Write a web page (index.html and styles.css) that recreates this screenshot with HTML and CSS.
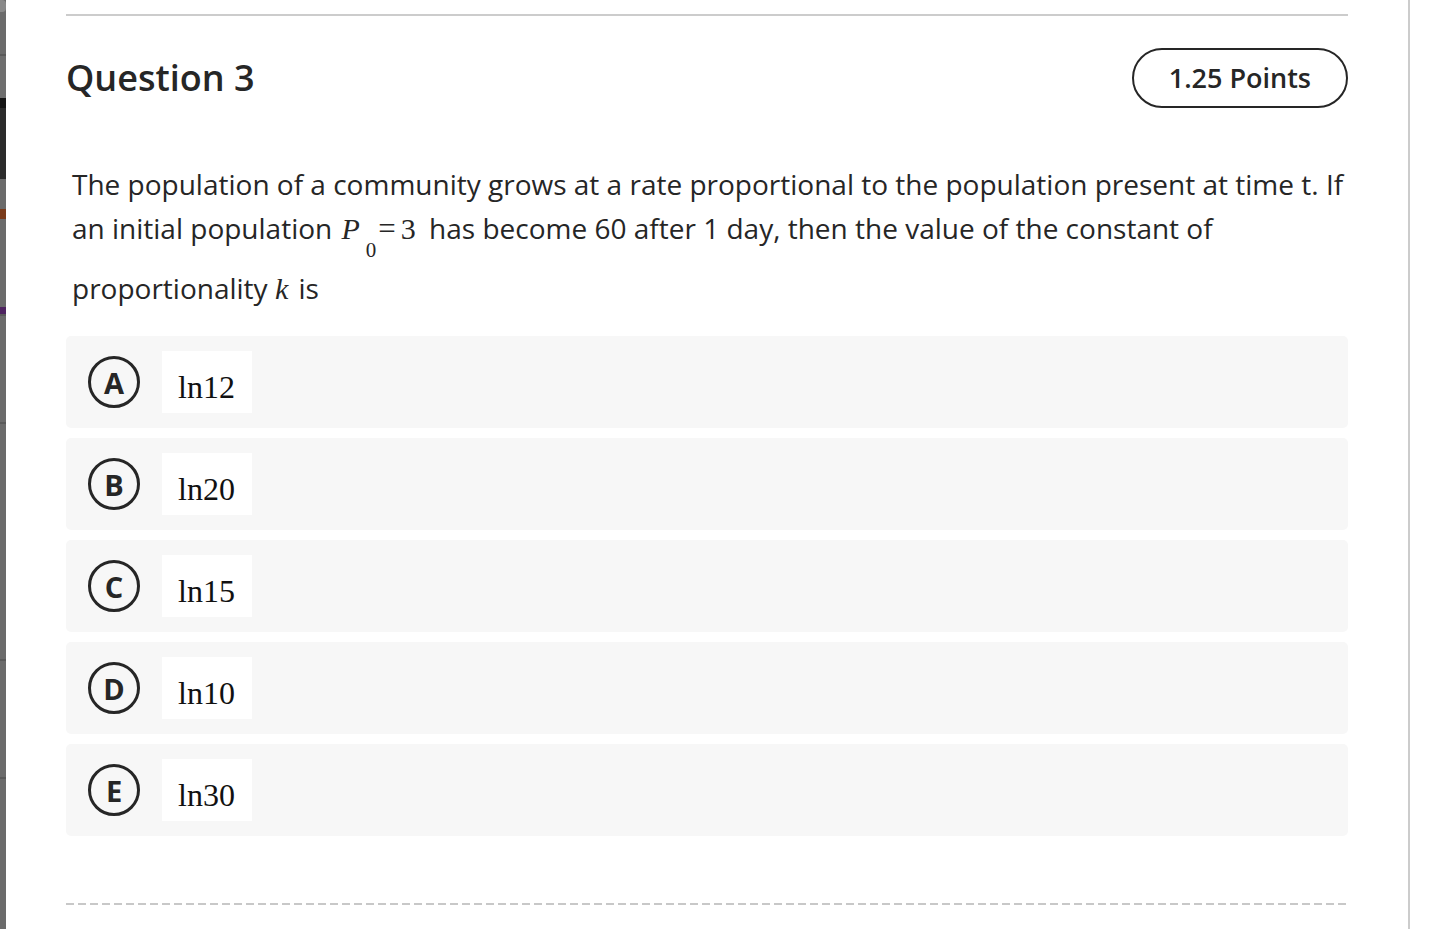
FILE: index.html
```html
<!DOCTYPE html>
<html lang="en">
<head>
<meta charset="utf-8">
<title>Question 3</title>
<link rel="stylesheet" href="styles.css">
</head>
<body>
<div class="page">
  <div class="strip">
    <div class="seg seg-cap"></div>
    <div class="seg seg-g1"></div>
    <div class="seg seg-line"></div>
    <div class="seg seg-g2"></div>
    <div class="seg seg-black"></div>
    <div class="seg seg-dark"></div>
    <div class="seg seg-g3"></div>
    <div class="seg seg-orange"></div>
    <div class="seg seg-g4"></div>
    <div class="seg seg-purple"></div>
    <div class="seg seg-line"></div>
    <div class="seg seg-g5"></div>
    <div class="seg seg-line"></div>
    <div class="seg seg-g6"></div>
    <div class="seg seg-line"></div>
    <div class="seg seg-g7"></div>
    <div class="seg seg-line"></div>
    <div class="seg seg-rest"></div>
  </div>
  <main class="main">
    <div class="top-rule"></div>
    <header class="q-header">
      <h2 class="q-title">Question 3</h2>
      <div class="points">1.25 Points</div>
    </header>
    <p class="q-text">The population of a community grows at a rate proportional to the population present at time t. If an initial population <span class="math"><i class="mi">P</i><span class="msub">0</span><span class="mo">=</span><span class="mn">3</span></span> has become 60 after 1 day, then the value of the constant of proportionality <i class="mi mk">k</i> is</p>
    <div class="options">
      <div class="option"><span class="letter">A</span><span class="answer">ln12</span></div>
      <div class="option"><span class="letter">B</span><span class="answer">ln20</span></div>
      <div class="option"><span class="letter">C</span><span class="answer">ln15</span></div>
      <div class="option"><span class="letter">D</span><span class="answer">ln10</span></div>
      <div class="option"><span class="letter">E</span><span class="answer">ln30</span></div>
    </div>
    <div class="dash-rule"></div>
  </main>
  <div class="gutter"></div>
</div>
</body>
</html>
```

FILE: styles.css
```css
* { box-sizing: border-box; }
html, body { margin: 0; padding: 0; background: #ffffff; }
body {
  font-family: "Open Sans", "Noto Sans", sans-serif;
  color: #262626;
}
.page {
  display: flex;
  height: 929px;
  overflow: hidden;
}
.strip {
  width: 6px;
  flex: 0 0 6px;
  display: flex;
  flex-direction: column;
  background: #6b6b6b;
}
.seg { width: 100%; }
.seg-cap { height: 12px; background: #8a8a8a; border-radius: 0 4px 4px 0; }
.seg-g1 { height: 42px; background: #6b6b6b; }
.seg-line { height: 2px; background: #5a5a5a; }
.seg-g2 { height: 42px; background: #6e6e6e; }
.seg-black { height: 10px; background: #151515; }
.seg-dark { height: 71px; background: #2b2b2b; }
.seg-g3 { height: 30px; background: #6b6b6b; }
.seg-orange { height: 10px; background: #7a3a1a; }
.seg-g4 { height: 88px; background: #6b6b6b; }
.seg-purple { height: 7px; background: #4e2360; }
.seg-g5 { height: 106px; background: #6b6b6b; }
.seg-g6 { height: 235px; background: #6b6b6b; }
.seg-g7 { height: 116px; background: #6b6b6b; }
.seg-rest { flex: 1; background: #6b6b6b; }

.main {
  flex: 0 0 1404px;
  padding: 0 60px;
  border-right: 2px solid #cccccc;
}
.gutter { flex: 1; }

.top-rule {
  margin-top: 14px;
  height: 2px;
  background: #cccccc;
}
.q-header {
  margin-top: 32px;
  display: flex;
  justify-content: space-between;
  align-items: center;
  height: 60px;
}
.q-title {
  margin: 0;
  font-size: 36px;
  font-weight: 600;
  line-height: 44px;
  color: #262626;
}
.points {
  height: 60px;
  padding: 0 35px;
  border: 2px solid #262626;
  border-radius: 30px;
  font-size: 27px;
  font-weight: 600;
  line-height: 56px;
}
.q-text {
  margin: 54px 0 0 0;
  padding-left: 6px;
  font-size: 28px;
  line-height: 44px;
}
.math, .mi, .mn, .mo, .msub {
  font-family: "Liberation Serif", "Times New Roman", serif;
}
.mi { font-style: italic; font-size: 30px; margin-left: 2px; }
.mk { margin: 0 3px 0 0; }
.msub {
  display: inline-block;
  font-size: 21px;
  line-height: 20px;
  padding-bottom: 6px;
  vertical-align: -18px;
  margin-left: 6px;
}
.mo { font-size: 31px; margin: 0 5px 0 2px; }
.mn { font-size: 30px; margin-right: 6px; }

.options {
  margin-top: 25px;
  display: flex;
  flex-direction: column;
  gap: 10px;
}
.option {
  height: 92px;
  background: #f7f7f7;
  border-radius: 5px;
  display: flex;
  align-items: center;
  padding-left: 22px;
}
.letter {
  width: 52px;
  height: 52px;
  border: 3px solid #262626;
  border-radius: 50%;
  display: flex;
  align-items: center;
  justify-content: center;
  font-size: 29px;
  font-weight: 700;
  color: #262626;
}
.answer {
  margin-left: 22px;
  width: 90px;
  height: 62px;
  background: #ffffff;
  padding: 20px 0 0 16px;
  font-family: "Liberation Serif", "Times New Roman", serif;
  font-size: 32px;
  line-height: 32px;
  color: #111111;
}
.dash-rule {
  margin-top: 67px;
  height: 2px;
  background: repeating-linear-gradient(to right, #c8c8c8 0 8px, transparent 8px 12px);
}
```
